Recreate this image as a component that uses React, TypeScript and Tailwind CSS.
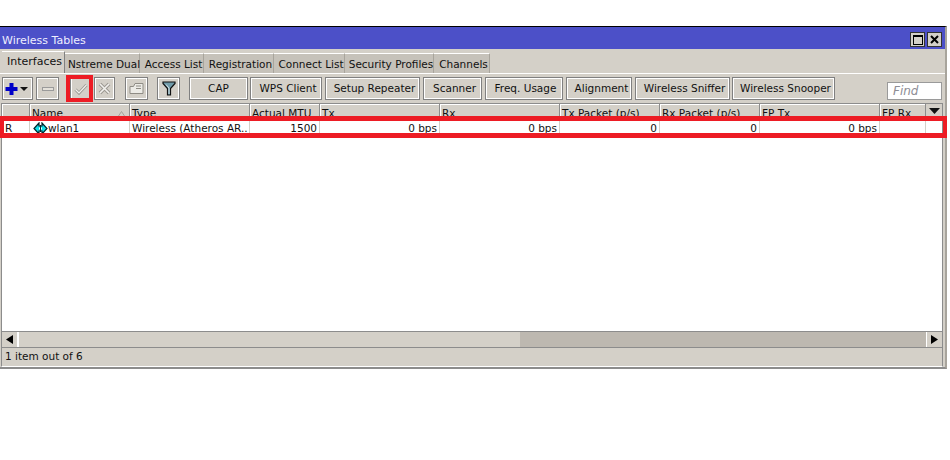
const tabs = [
  { label: "Nstreme Dual", w: "w-[75px]" },
  { label: "Access List", w: "w-[64px]" },
  { label: "Registration", w: "w-[70px]" },
  { label: "Connect List", w: "w-[71px]" },
  { label: "Security Profiles", w: "w-[89px]" },
  { label: "Channels", w: "w-[56px]" },
];

const actions = [
  { label: "CAP", w: "w-[59px]", ml: "ml-[9px]", pl: "pl-0" },
  { label: "WPS Client", w: "w-[72px]", ml: "ml-[2px]", pl: "pl-[4px]" },
  { label: "Setup Repeater", w: "w-[95px]", ml: "ml-[3px]", pl: "pl-[4px]" },
  { label: "Scanner", w: "w-[59px]", ml: "ml-[3px]", pl: "pl-[4px]" },
  { label: "Freq. Usage", w: "w-[78px]", ml: "ml-[3px]", pl: "pl-[3px]" },
  { label: "Alignment", w: "w-[66px]", ml: "ml-[3px]", pl: "pl-[5px]" },
  { label: "Wireless Sniffer", w: "w-[95px]", ml: "ml-[3px]", pl: "pl-[4px]" },
  { label: "Wireless Snooper", w: "w-[103px]", ml: "ml-[2px]", pl: "pl-[4px]" },
];

const columns = [
  { label: "", w: "w-[28px]" },
  { label: "Name", w: "w-[100px]" },
  { label: "Type", w: "w-[120px]" },
  { label: "Actual MTU", w: "w-[70px]" },
  { label: "Tx", w: "w-[120px]" },
  { label: "Rx", w: "w-[120px]" },
  { label: "Tx Packet (p/s)", w: "w-[100px]" },
  { label: "Rx Packet (p/s)", w: "w-[100px]" },
  { label: "FP Tx", w: "w-[120px]" },
  { label: "FP Rx", w: "w-[46px]" },
];

const row = [
  { text: "R", w: "w-[28px]", align: "text-left" },
  { text: "", w: "w-[100px]", align: "text-left" },
  { text: "Wireless (Atheros AR..", w: "w-[120px]", align: "text-left" },
  { text: "1500", w: "w-[70px]", align: "text-right" },
  { text: "0 bps", w: "w-[120px]", align: "text-right" },
  { text: "0 bps", w: "w-[120px]", align: "text-right" },
  { text: "0", w: "w-[100px]", align: "text-right" },
  { text: "0", w: "w-[100px]", align: "text-right" },
  { text: "0 bps", w: "w-[120px]", align: "text-right" },
  { text: "", w: "w-[46px]", align: "text-right" },
];

const raised = "border border-[#808080] shadow-[inset_1px_1px_0_#ffffff,inset_-1px_-1px_0_#ffffff]";

function IconButton({ w, ml, children }: { w: string; ml: string; children: React.ReactNode }) {
  return <div className={`${w} ${ml} flex h-[23px] shrink-0 items-center justify-center ${raised}`}>{children}</div>;
}

function WlanIcon() {
  return (
    <svg width="15" height="13" viewBox="0 0 15 13" className="shrink-0">
      <path d="M6 1 L1 6.5 L6 12 V9 H9 V12 L14 6.5 L9 1 V4 H6 Z" fill="#12dfe8" stroke="#03242a" strokeWidth="1.2" />
      <path d="M6 5.5 H9 V7.5 H6 Z" fill="#ffffff" />
      <path d="M7.5 3V10" stroke="#03242a" strokeWidth="1" />
    </svg>
  );
}

export default function App() {
  return (
    <div className="relative h-[460px] w-[950px] overflow-hidden bg-white pt-[26px] font-['DejaVu_Sans',sans-serif] text-[10.5px] text-[#111111]">
      <div className="h-[343px] w-[947px] border-t border-r-2 border-b-2 border-t-black border-r-[#a8a49c] border-b-[#8c8c8c] bg-[#d4d0c8]">
        {/* title bar */}
        <div className="flex h-[22px] items-center justify-between bg-[#4c50c8] pr-[3px] pl-[2px] pt-[3px] text-white">
          <span className="pt-[3px] text-[11px] text-[#eeeeff]">Wireless Tables</span>
          <div className="flex gap-[2px]">
            <div className="flex h-[15px] w-[15px] items-center justify-center border border-[#333] bg-[#d4d0c8]">
              <div className="h-[10px] w-[10px] border border-black border-t-2" />
            </div>
            <div className="flex h-[15px] w-[15px] items-center justify-center border border-[#333] bg-[#d4d0c8]">
              <svg width="9" height="9" viewBox="0 0 9 9">
                <path d="M1 1 L8 8 M8 1 L1 8" stroke="black" strokeWidth="2" />
              </svg>
            </div>
          </div>
        </div>

        {/* tabs */}
        <div className="flex h-[24px] items-end pl-[2px]">
          <div className="z-10 flex h-[22px] w-[63px] items-center justify-center border-t border-r border-t-white border-r-[#808080] bg-[#d4d0c8] pl-[3px] text-[11px]">
            Interfaces
          </div>
          {tabs.map((t) => (
            <div
              key={t.label}
              className={`${t.w} flex h-[20px] items-center justify-center border-r border-t border-t-white border-r-[#a8a49c] bg-[#c6c2ba] pt-[3px] pl-[4px] whitespace-nowrap`}
            >
              {t.label}
            </div>
          ))}
        </div>

        {/* panel */}
        <div className="border-t border-t-white">
          {/* toolbar */}
          <div className="flex h-[29px] items-start pt-[3px] pl-[2px]">
            <IconButton w="w-[31px]" ml="ml-0">
              <svg width="26" height="14" viewBox="0 0 26 14">
                <path d="M6.5 1V13M0.5 7H12.5" stroke="#0000c8" strokeWidth="4" />
                <path d="M15 5H23L19 9Z" fill="#111" />
              </svg>
            </IconButton>
            <IconButton w="w-[23px]" ml="ml-[3px]">
              <div className="h-[4px] w-[12px] border border-[#9a9a9a] bg-[#e4e1da]" />
            </IconButton>
            <IconButton w="w-[21px]" ml="ml-[11px]">
              <svg width="14" height="12" viewBox="0 0 14 12">
                <path d="M1.5 6.5 L5 10 L12.5 2" fill="none" stroke="#9c9992" strokeWidth="3" />
                <path d="M1.5 6.5 L5 10 L12.5 2" fill="none" stroke="#f2f1ed" strokeWidth="1.2" />
              </svg>
            </IconButton>
            <IconButton w="w-[21px]" ml="ml-[3px]">
              <svg width="13" height="13" viewBox="0 0 13 13">
                <path d="M2 2 L11 11 M11 2 L2 11" stroke="#9c9992" strokeWidth="3.6" />
                <path d="M2 2 L11 11 M11 2 L2 11" stroke="#f2f1ed" strokeWidth="1.6" />
              </svg>
            </IconButton>
            <IconButton w="w-[23px]" ml="ml-[10px]">
              <svg width="15" height="13" viewBox="0 0 15 13">
                <path d="M1 4.5 L4.5 4.5 L6 1.5 H14 V11.5 H1 Z" fill="#ecebe6" stroke="#8f8c85" />
                <path d="M7 4 H12 M7 6.5 H12" stroke="#8f8c85" />
              </svg>
            </IconButton>
            <IconButton w="w-[23px]" ml="ml-[9px]">
              <svg width="14" height="15" viewBox="0 0 14 15">
                <path d="M1 1 H13 V2.5 L8.5 7.5 V14 H5.5 V7.5 L1 2.5 Z" fill="#6f9aa8" stroke="#111" strokeWidth="1.2" />
                <path d="M4 3.5 L7 7 V13" fill="none" stroke="#d7e4e8" strokeWidth="1" />
              </svg>
            </IconButton>
            {actions.map((a) => (
              <div
                key={a.label}
                className={`${a.w} ${a.ml} ${a.pl} flex h-[23px] shrink-0 items-center justify-center pt-[1px] whitespace-nowrap ${raised}`}
              >
                {a.label}
              </div>
            ))}
            <div className="mt-[5px] ml-[52px] flex h-[18px] w-[55px] shrink-0 items-center border border-[#9a9a9a] bg-white pl-[5px] text-[12px] text-[#8d8d95] italic">
              Find
            </div>
          </div>

          {/* table */}
          <div className="mr-[2px] ml-[1px] h-[229px] border border-[#8c8c8c] bg-white">
            <div className="flex h-[17px] overflow-hidden bg-[#d4d0c8]">
              {columns.map((c) => (
                <div key={c.label} className={`${c.w} relative shrink-0 border-r border-[#8c8c8c] pt-[2px] pl-[2px] shadow-[inset_1px_1px_0_#ffffff] whitespace-nowrap`}>
                  {c.label}
                  {c.label === "Name" && (
                    <svg width="9" height="7" viewBox="0 0 9 7" className="absolute top-[7px] right-[3px]">
                      <path d="M4.5 0.5 L8.5 6.5 H0.5 Z" fill="none" stroke="#a5a29b" />
                    </svg>
                  )}
                </div>
              ))}
              <div className="flex flex-1 items-start justify-center pt-[4px]">
                <svg width="11" height="6" viewBox="0 0 11 6">
                  <path d="M0 0 H11 L5.5 6 Z" fill="#111" />
                </svg>
              </div>
            </div>
            <div className="flex h-[14px] items-center">
              {row.map((c, i) => (
                <div key={i} className={`${c.w} ${c.align} h-full shrink-0 border-r border-[#d4d0c8] px-[2px] leading-[14px] whitespace-nowrap ${i === 0 ? "pl-[3px]" : ""}`}>
                  {i === 1 ? (
                    <div className="flex items-center pl-[1px]">
                      <WlanIcon />
                      <span>wlan1</span>
                    </div>
                  ) : (
                    c.text
                  )}
                </div>
              ))}
            </div>
          </div>

          {/* scrollbar */}
          <div className="mr-[2px] ml-[1px] flex h-[16px] border-x border-b border-[#8c8c8c] bg-[#d4d0c8]">
            <div className="flex w-[16px] shrink-0 items-center justify-center border-r border-white">
              <svg width="7" height="9" viewBox="0 0 7 9">
                <path d="M7 0 V9 L0 4.5 Z" fill="#000" />
              </svg>
            </div>
            <div className="w-[502px] shrink-0 border-l border-white" />
            <div className="flex-1 bg-[#bdb8b0]" />
            <div className="flex w-[16px] shrink-0 items-center justify-center border-l border-white">
              <svg width="7" height="9" viewBox="0 0 7 9">
                <path d="M0 0 V9 L7 4.5 Z" fill="#000" />
              </svg>
            </div>
          </div>

          {/* status */}
          <div className="mr-[2px] ml-[1px] flex h-[19px] items-center border-x border-b border-x-[#8c8c8c] border-b-white pl-[3px]">
            1 item out of 6
          </div>
        </div>
      </div>

      {/* red annotation boxes */}
      <div className="pointer-events-none absolute top-[116px] left-0 h-[22px] w-[947px] border-y-[5px] border-x-[4px] border-[#ed1c24]" />
      <div className="pointer-events-none absolute top-[75px] left-[66px] h-[27px] w-[27px] border-[4px] border-[#ed1c24]" />
    </div>
  );
}
